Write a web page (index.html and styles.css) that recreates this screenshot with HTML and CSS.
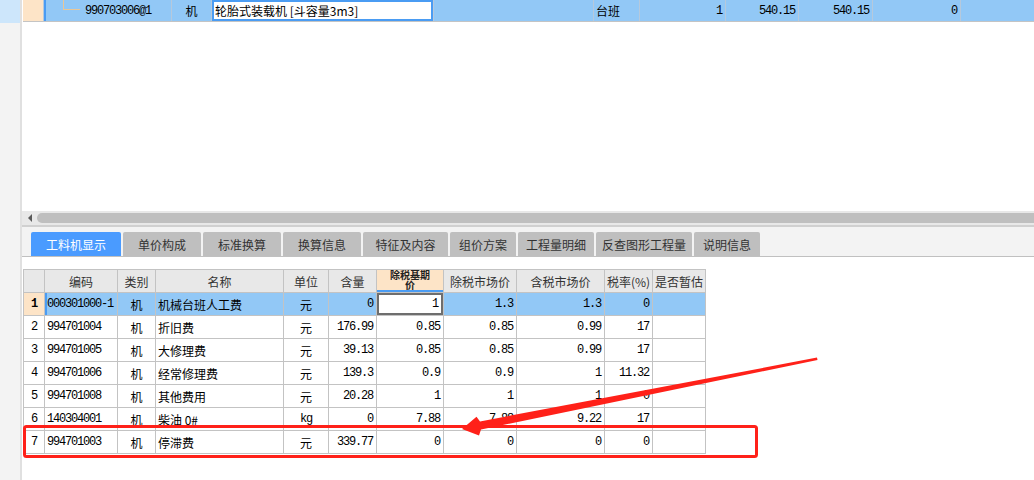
FILE: index.html
```html
<!DOCTYPE html>
<html lang="zh-CN">
<head>
<meta charset="utf-8">
<title>工料机显示</title>
<link rel="stylesheet" href="styles.css">
</head>
<body>
<div class="app">
  <aside class="sidebar"><div class="sidebar-top"></div></aside>
  <main class="main">
    <section class="upper">
      <div class="trow">
        <div class="tc tc-head"></div>
        <div class="tc tc-code"><span class="tree"></span><span class="mono">990703006@1</span></div>
        <div class="tc tc-center">机</div>
        <div class="tc tc-name">轮胎式装载机 [斗容量3m3]</div>
        <div class="tc"></div>
        <div class="tc tc-text">台班</div>
        <div class="tc tc-num mono">1</div>
        <div class="tc tc-num mono">540.15</div>
        <div class="tc tc-num mono">540.15</div>
        <div class="tc tc-num mono">0</div>
        <div class="tc"></div>
      </div>
    </section>

    <div class="hscroll">
      <span class="hscroll-arrow"></span>
      <div class="hscroll-thumb"></div>
    </div>

    <nav class="tabs">
      <div class="tab tab-active w90">工料机显示</div>
      <div class="tab w78">单价构成</div>
      <div class="tab w78">标准换算</div>
      <div class="tab w78">换算信息</div>
      <div class="tab w85">特征及内容</div>
      <div class="tab w66">组价方案</div>
      <div class="tab w76">工程量明细</div>
      <div class="tab w96">反查图形工程量</div>
      <div class="tab w66">说明信息</div>
    </nav>

    <section class="lower">
      <div class="grid">
        <div class="grow grow-head">
          <div class="gc"></div>
          <div class="gc gc-c">编码</div>
          <div class="gc gc-c">类别</div>
          <div class="gc gc-c">名称</div>
          <div class="gc gc-c">单位</div>
          <div class="gc gc-c">含量</div>
          <div class="gc gc-c gc-sorted"><span class="sorted-line">除税基期</span><span class="sorted-line">价</span></div>
          <div class="gc gc-c">除税市场价</div>
          <div class="gc gc-c">含税市场价</div>
          <div class="gc gc-c">税率(%)</div>
          <div class="gc gc-c">是否暂估</div>
        </div>

        <div class="grow grow-sel">
          <div class="gc gc-idx gc-idx-sel mono">1</div>
          <div class="gc gc-code gc-focus mono">000301000-1</div>
          <div class="gc gc-c">机</div>
          <div class="gc">机械台班人工费</div>
          <div class="gc gc-c">元</div>
          <div class="gc gc-n mono">0</div>
          <div class="gc gc-n gc-edit mono">1</div>
          <div class="gc gc-n mono">1.3</div>
          <div class="gc gc-n mono">1.3</div>
          <div class="gc gc-n mono">0</div>
          <div class="gc"></div>
        </div>

        <div class="grow">
          <div class="gc gc-idx mono">2</div>
          <div class="gc gc-code mono">994701004</div>
          <div class="gc gc-c">机</div>
          <div class="gc">折旧费</div>
          <div class="gc gc-c">元</div>
          <div class="gc gc-n mono">176.99</div>
          <div class="gc gc-n mono">0.85</div>
          <div class="gc gc-n mono">0.85</div>
          <div class="gc gc-n mono">0.99</div>
          <div class="gc gc-n mono">17</div>
          <div class="gc"></div>
        </div>

        <div class="grow">
          <div class="gc gc-idx mono">3</div>
          <div class="gc gc-code mono">994701005</div>
          <div class="gc gc-c">机</div>
          <div class="gc">大修理费</div>
          <div class="gc gc-c">元</div>
          <div class="gc gc-n mono">39.13</div>
          <div class="gc gc-n mono">0.85</div>
          <div class="gc gc-n mono">0.85</div>
          <div class="gc gc-n mono">0.99</div>
          <div class="gc gc-n mono">17</div>
          <div class="gc"></div>
        </div>

        <div class="grow">
          <div class="gc gc-idx mono">4</div>
          <div class="gc gc-code mono">994701006</div>
          <div class="gc gc-c">机</div>
          <div class="gc">经常修理费</div>
          <div class="gc gc-c">元</div>
          <div class="gc gc-n mono">139.3</div>
          <div class="gc gc-n mono">0.9</div>
          <div class="gc gc-n mono">0.9</div>
          <div class="gc gc-n mono">1</div>
          <div class="gc gc-n mono">11.32</div>
          <div class="gc"></div>
        </div>

        <div class="grow">
          <div class="gc gc-idx mono">5</div>
          <div class="gc gc-code mono">994701008</div>
          <div class="gc gc-c">机</div>
          <div class="gc">其他费用</div>
          <div class="gc gc-c">元</div>
          <div class="gc gc-n mono">20.28</div>
          <div class="gc gc-n mono">1</div>
          <div class="gc gc-n mono">1</div>
          <div class="gc gc-n mono">1</div>
          <div class="gc gc-n mono">0</div>
          <div class="gc"></div>
        </div>

        <div class="grow">
          <div class="gc gc-idx mono">6</div>
          <div class="gc gc-code mono">140304001</div>
          <div class="gc gc-c">机</div>
          <div class="gc">柴油 0#</div>
          <div class="gc gc-c mono">kg</div>
          <div class="gc gc-n mono">0</div>
          <div class="gc gc-n mono">7.88</div>
          <div class="gc gc-n mono">7.88</div>
          <div class="gc gc-n mono">9.22</div>
          <div class="gc gc-n mono">17</div>
          <div class="gc"></div>
        </div>

        <div class="grow">
          <div class="gc gc-idx mono">7</div>
          <div class="gc gc-code mono">994701003</div>
          <div class="gc gc-c">机</div>
          <div class="gc">停滞费</div>
          <div class="gc gc-c">元</div>
          <div class="gc gc-n mono">339.77</div>
          <div class="gc gc-n mono">0</div>
          <div class="gc gc-n mono">0</div>
          <div class="gc gc-n mono">0</div>
          <div class="gc gc-n mono">0</div>
          <div class="gc"></div>
        </div>
      </div>
    </section>
  </main>

  <svg class="annot" width="1034" height="480" viewBox="0 0 1034 480" aria-hidden="true">
    <rect x="24.5" y="426.5" width="732" height="30" rx="2" ry="2" fill="none" stroke="#ff2119" stroke-width="3"/>
    <polygon fill="#ff2119" points="817,357.6 480,421.4 476.5,416.8 462,429 479,435.6 481,429.6 817.5,360"/>
  </svg>
</div>
</body>
</html>
```

FILE: styles.css
```css
* { box-sizing: border-box; }

html, body {
  margin: 0;
  padding: 0;
  background: #ffffff;
}

body {
  font-family: "Noto Sans CJK SC", "Noto Sans", sans-serif;
  font-size: 12px;
  color: #000;
  width: 1034px;
  height: 480px;
  overflow: hidden;
}

.app {
  position: relative;
  display: flex;
  width: 1034px;
  height: 480px;
}

.sidebar {
  width: 22px;
  flex: none;
  background: #f3f3f3;
  border-right: 2px solid #e0e0e0;
}

.sidebar-top {
  height: 23px;
  background: #cde6fb;
}

.main {
  flex: 1;
  display: flex;
  flex-direction: column;
  min-width: 0;
}

.mono {
  font-family: "Liberation Mono", "DejaVu Sans Mono", monospace;
  font-size: 12px;
  letter-spacing: -1.2px;
}

/* upper grid */
.upper {
  height: 211px;
  flex: none;
  padding-left: 1px;
}

.trow {
  display: grid;
  grid-template-columns: 20px 127px 39px 221px 159px 45px 85px 72px 73px 87px 1fr;
  column-gap: 1px;
  height: 22px;
  background: #b6c9dc;
  border-bottom: 1px solid #c4c4c4;
}

.tc {
  background: #92c8f6;
  display: flex;
  align-items: center;
  white-space: nowrap;
  overflow: hidden;
  padding: 0 3px;
}

.tc-head {
  background: #fde4c7;
}

.tc-code {
  padding-left: 19px;
  box-shadow: inset 2px 0 0 #4a9cf3;
  align-items: stretch;
}

.tc-code .mono {
  display: flex;
  align-items: center;
  margin-left: 5px;
}

.tree {
  width: 17px;
  height: 10px;
  border-left: 1px solid #e9c797;
  border-bottom: 1px solid #e9c797;
}

.tc-center { justify-content: center; }

.tc-name {
  background: #fff;
  box-shadow: inset 0 0 0 2px #4a9cf3;
  padding-left: 3px;
}

.tc-text { padding-left: 2px; }

.tc-num {
  justify-content: flex-end;
  padding-right: 3px;
}

/* horizontal scrollbar */
.hscroll {
  height: 16px;
  flex: none;
  background: #e8e8e8;
  border-bottom: 2px solid #d0d0d0;
  display: flex;
  align-items: center;
}

.hscroll-arrow {
  width: 0;
  height: 0;
  margin-left: 6px;
  border-top: 4px solid transparent;
  border-bottom: 4px solid transparent;
  border-right: 4px solid #5a5a5a;
}

.hscroll-thumb {
  flex: 1;
  height: 10px;
  margin-left: 5px;
  background: #bfbfbf;
  border-radius: 5px 0 0 5px;
}

/* tabs */
.tabs {
  height: 30px;
  flex: none;
  background: #f3f3f3;
  border-bottom: 1px solid #c0c0c0;
  display: flex;
  align-items: flex-end;
  gap: 2px;
  padding-left: 9px;
}

.tab {
  height: 24px;
  background: #bfbfbf;
  color: #333;
  border-radius: 2px 2px 0 0;
  display: flex;
  align-items: center;
  justify-content: center;
  white-space: nowrap;
}

.tab-active {
  background: #4a9bff;
  color: #fff;
}

.w90 { width: 90px; }
.w85 { width: 85px; }
.w78 { width: 78px; }
.w76 { width: 76px; }
.w66 { width: 66px; }
.w96 { width: 96px; }

/* lower grid */
.lower {
  padding: 12px 0 0 1px;
}

.grid {
  display: inline-flex;
  flex-direction: column;
  gap: 1px;
  padding: 1px;
  background: #c3c3c3;
}

.grow {
  display: grid;
  grid-template-columns: 20px 72px 37px 127px 44px 47px 66px 72px 87px 47px 52px;
  column-gap: 1px;
  height: 22px;
}

.gc {
  background: #fff;
  display: flex;
  align-items: center;
  padding: 0 2px;
  white-space: nowrap;
  overflow: hidden;
}

.grow-head .gc {
  background: #e8e8e8;
  color: #333;
}

.grow-head .gc-sorted {
  background: #fde4c7;
  color: #222;
  font-weight: bold;
  font-size: 10px;
  flex-direction: column;
  justify-content: flex-start;
  align-items: center;
  box-shadow: inset 0 -2px 0 #4a9cf3;
  padding: 0;
}

.sorted-line {
  display: block;
  height: 10px;
  line-height: 10px;
}

.gc-c { justify-content: center; text-align: center; }

.gc-n {
  justify-content: flex-end;
  padding-right: 3px;
}

.gc-idx {
  justify-content: center;
}

.gc-idx-sel {
  background: #fde4c7;
  font-weight: bold;
}

.grow-sel .gc {
  background: #92c8f6;
}

.grow-sel .gc-idx-sel {
  background: #fde4c7;
}

.grow-sel .gc-focus {
  box-shadow: inset 2px 0 0 #4a9cf3;
}

.grow-sel .gc-edit {
  background: #fff;
  box-shadow: inset 0 0 0 2px #6e6e6e;
  padding-right: 5px;
}

/* annotation overlay */
.annot {
  position: absolute;
  left: 0;
  top: 0;
  pointer-events: none;
}
```
